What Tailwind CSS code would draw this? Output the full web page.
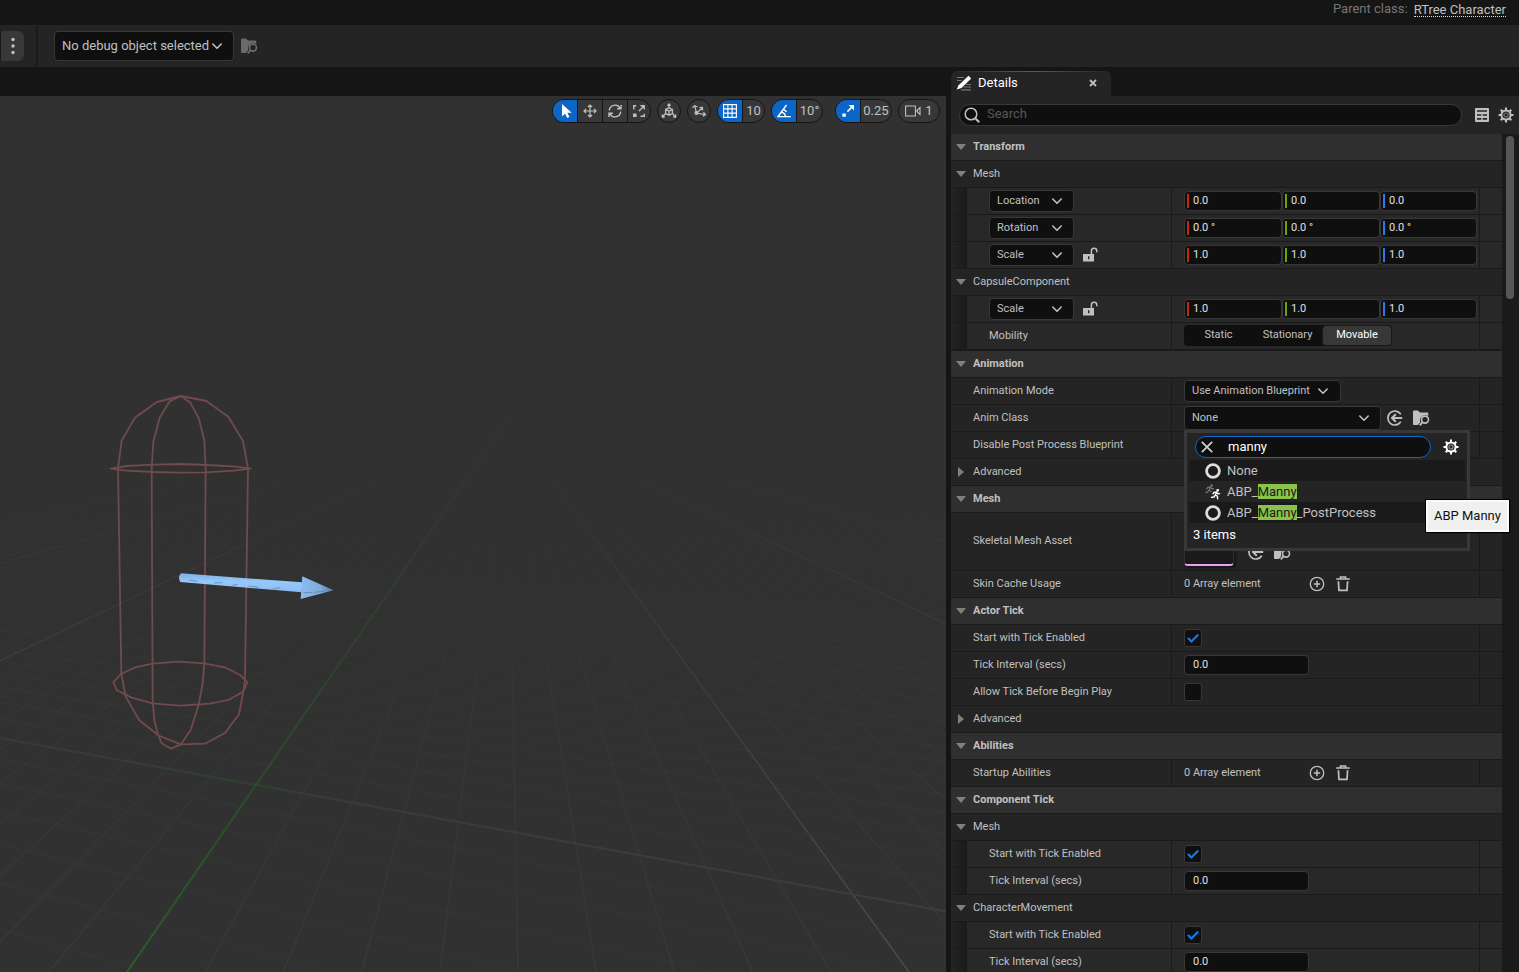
<!DOCTYPE html>
<html lang="en">
<head>
  <meta charset="UTF-8" />
  <meta name="viewport" content="width=device-width, initial-scale=1.0" />
  <title>Blueprint Editor</title>
  <script src="https://cdn.jsdelivr.net/npm/@tailwindcss/browser@4"></script>
</head>
<body class="flex h-screen flex-col overflow-hidden bg-[#151515] font-['Roboto',sans-serif] text-[11px] text-[#c0c0c0]">

  <!-- Icon set -->
  <svg class="hidden">
    <symbol id="chevron" viewBox="0 0 12 12"><path d="M1.8 4 6 8.2 10.2 4" fill="none" stroke="currentColor" stroke-width="1.6" stroke-linecap="round" stroke-linejoin="round" /></symbol>
    <symbol id="tri-down" viewBox="0 0 10 6"><path d="M0 0h10L5 6z" fill="currentColor" /></symbol>
    <symbol id="tri-right" viewBox="0 0 6 10"><path d="M0 0v10l6-5z" fill="currentColor" /></symbol>
    <symbol id="browse" viewBox="0 0 17 16">
      <path d="M0 1.5C0 1 .4.6 1 .6h3.8L7 2.6h7.4c.5 0 .9.4.9.9V6a5.4 5.4 0 0 0-8 6.2L5 15H1c-.6 0-1-.4-1-1z" fill="currentColor" />
      <circle cx="12" cy="9.6" r="3.5" fill="none" stroke="currentColor" stroke-width="1.6" />
      <path d="m9.6 12.2-2.8 3.2" stroke="currentColor" stroke-width="1.8" />
    </symbol>
    <symbol id="use-asset" viewBox="0 0 16 16">
      <path d="M13.8 4.2A7 7 0 1 0 13.8 11.8" fill="none" stroke="currentColor" stroke-width="1.7" />
      <path d="M15.2 8H5M8.8 4.2 5 8l3.8 3.8" fill="none" stroke="currentColor" stroke-width="2" />
    </symbol>
    <symbol id="lock-open" viewBox="0 0 15 15">
      <path d="M0 7h11v7.5H0z" fill="currentColor" />
      <path d="M8.4 7V4a2.7 2.7 0 0 1 5.4 0v1.2" fill="none" stroke="currentColor" stroke-width="1.5" />
      <path d="M5 9.2h1.4v3H5z" fill="#242424" />
    </symbol>
    <symbol id="gear" viewBox="0 0 16 16">
      <circle cx="8" cy="8" r="4.6" fill="none" stroke="currentColor" stroke-width="2" />
      <circle cx="8" cy="8" r="2" fill="none" stroke="currentColor" stroke-width="1.2" opacity=".5" />
      <path d="M8 .5v3M8 12.5v3M.5 8h3M12.5 8h3M2.7 2.7l2 2M11.3 11.3l2 2M2.7 13.3l2-2M11.3 4.7l2-2" stroke="currentColor" stroke-width="2" />
    </symbol>
    <symbol id="plus-circle" viewBox="0 0 16 16">
      <circle cx="8" cy="8" r="6.7" fill="none" stroke="currentColor" stroke-width="1.3" />
      <path d="M8 4.8v6.4M4.8 8h6.4" stroke="currentColor" stroke-width="1.5" />
    </symbol>
    <symbol id="trash" viewBox="0 0 16 16">
      <path d="M1.2 3h13.6M5.4 2.6V1h5.2v1.600" fill="none" stroke="currentColor" stroke-width="1.5" />
      <path d="M3.400 5.200 4 14.400h8l.6-9.200" fill="none" stroke="currentColor" stroke-width="1.7" />
    </symbol>
    <symbol id="tick" viewBox="0 0 18 18"><path d="m4.5 9.6 2.9 3 6.2-6.4" fill="none" stroke="#0f7bf0" stroke-width="2.2" stroke-linecap="round" stroke-linejoin="round" /></symbol>
    <symbol id="ring" viewBox="0 0 16 16"><circle cx="8" cy="8" r="6.4" fill="none" stroke="#dcdcdc" stroke-width="2.8" /></symbol>
  </svg>

  <!-- Menu strip -->
  <header class="flex h-[25px] shrink-0 items-start justify-end gap-[6px] pr-[13px] text-[13px] leading-[18px]">
    <span class="text-[#767676]">Parent class:</span>
    <a href="#" class="mt-px h-[16px] border-b border-dotted border-[#dddddd]">RTree Character</a>
  </header>

  <!-- Toolbar -->
  <div class="flex h-[42px] shrink-0 items-center bg-[#242424]">
    <button aria-label="More options" class="mr-[12px] flex h-[30px] w-[24px] items-center justify-center rounded-r-md border-l border-[#1a1a1a] bg-[#383838]">
      <svg class="h-[18px] w-[4px]" viewBox="0 0 4 18" fill="#c0c0c0"><circle cx="2" cy="2.5" r="1.7" /><circle cx="2" cy="9" r="1.7" /><circle cx="2" cy="15.5" r="1.7" /></svg>
    </button>
    <div class="mr-[16px] h-[40px] w-[2px] bg-[#1a1a1a]"></div>
    <div class="relative">
      <select aria-label="Debug object" class="h-[30px] w-[180px] appearance-none rounded-[4px] border border-[#383838] bg-[#0f0f0f] pl-[7px] text-[13px]"><option>No debug object selected</option></select>
      <svg class="pointer-events-none absolute top-[9px] right-[11px] size-[12px]"><use href="#chevron" /></svg>
    </div>
    <button aria-label="Browse to debug object" class="ml-[7px] text-[#6a6a6a]"><svg class="h-[16px] w-[17px]"><use href="#browse" /></svg></button>
  </div>

  <div class="flex min-h-0 flex-1">

    <!-- Viewport -->
    <main class="relative mt-[29px] mr-[5px] min-w-0 flex-1 overflow-hidden bg-[#313131]">
      <svg class="absolute inset-0 size-full" viewBox="0 96 946 876" preserveAspectRatio="xMidYMid slice" fill="none">
        <defs>
          <linearGradient id="fadeMinor" gradientUnits="userSpaceOnUse" x1="0" y1="470" x2="0" y2="972">
            <stop offset="0" stop-color="#fff" stop-opacity="0" /><stop offset=".3" stop-color="#fff" stop-opacity=".01" /><stop offset="1" stop-color="#fff" stop-opacity=".035" />
          </linearGradient>
          <linearGradient id="fadeMajor" gradientUnits="userSpaceOnUse" x1="0" y1="460" x2="0" y2="972">
            <stop offset="0" stop-color="#fff" stop-opacity="0" /><stop offset="1" stop-color="#fff" stop-opacity=".13" />
          </linearGradient>
          <linearGradient id="fadeGreen" gradientUnits="userSpaceOnUse" x1="0" y1="460" x2="0" y2="972">
            <stop offset="0" stop-color="#2a5a2a" stop-opacity=".1" /><stop offset=".6" stop-color="#2a5a2a" stop-opacity=".6" /><stop offset="1" stop-color="#285f28" />
          </linearGradient>
          <linearGradient id="crossMajor" gradientUnits="userSpaceOnUse" x1="0" y1="0" x2="946" y2="0">
            <stop offset="0" stop-color="#383a38" /><stop offset=".27" stop-color="#2e422e" /><stop offset=".45" stop-color="#3b3b3b" /><stop offset="1" stop-color="#3d3d3d" />
          </linearGradient>
          <linearGradient id="crossMinor" gradientUnits="userSpaceOnUse" x1="0" y1="0" x2="946" y2="0">
            <stop offset="0" stop-color="#313931" /><stop offset=".35" stop-color="#323732" /><stop offset=".5" stop-color="#353535" /><stop offset="1" stop-color="#353535" />
          </linearGradient>
          <linearGradient id="shaft" x1="0" y1="0" x2="0" y2="1">
            <stop offset="0" stop-color="#7fb0e6" /><stop offset=".45" stop-color="#96c8fb" /><stop offset="1" stop-color="#8abcf2" />
          </linearGradient>
          <linearGradient id="head" x1="0" y1="0" x2="1" y2="0">
            <stop offset="0" stop-color="#8cbcf0" /><stop offset=".6" stop-color="#7dabdc" /><stop offset="1" stop-color="#557796" />
          </linearGradient>
        </defs>
        <g id="grid"></g>

        <!-- Capsule and forward arrow -->
        <g transform="translate(90 380) scale(.3333)">
          <g stroke="#704a4d" stroke-width="5.5" stroke-linejoin="round">
            <path d="M84 265 95 182 135 113 200 66 273 48 349 63 415 110 459 183 474 265 465 900 460 935 447 1003 405 1059 345 1091 273 1093 208 1068 148 1021 107 950 94 880Z" />
            <path d="M185 265 190 185 209 113 239 64 273 48 301 68 327 116 343 182 347 265 343 850 338 910 326 975 302 1050 273 1093 243 1106 215 1090 204 1064 193 1020 188 960Z" />
            <path d="M62 266 110 258 190 254 272 252 350 255 430 259 482 266 430 272 350 277 272 278 190 276 110 272Z" />
            <path d="M70 907 93 882 135 862 188 851 265 845 342 850 405 862 450 885 472 907 460 935 415 960 360 971 270 977 188 970 125 953 81 931Z" />
          </g>
          <path d="M273 580 637 607 635 637 271 606Q262 593 273 580Z" fill="url(#shaft)" />
          <path d="M637 589 731 631 632 657Z" fill="url(#head)" />
          <path d="M298 601l24 3M372 609l26-1M428 616l14-3M476 618l28 4M548 627l22-4M640 638l28 0M672 637l30-3" stroke="#5f86b0" stroke-width="2.5" />
        </g>
      </svg>

      <div class="relative flex justify-end gap-[6px] pt-[3px] pr-[6px] text-[13px]">
        <div class="flex h-[24px] overflow-hidden rounded-full border border-[#151515] bg-[#383838]">
          <button aria-label="Select" class="flex w-[24px] items-center justify-center bg-[#0b66c8]"><svg class="ml-[4px] size-[16px]" viewBox="0 0 16 16"><path d="M3 1v12.5l3.1-2.8L8.2 15l2.2-1-2-4.2h4.3z" fill="#fff" /></svg></button>
          <button aria-label="Move" class="flex w-[25px] items-center justify-center border-l border-[#151515]"><svg class="size-[14px]" viewBox="0 0 14 14" fill="none" stroke="currentColor" stroke-width="1.2"><path d="M7 1v12M1 7h12M5 3l2-2 2 2M5 11l2 2 2-2M3 5 1 7l2 2M11 5l2 2-2 2" /></svg></button>
          <button aria-label="Rotate" class="flex w-[25px] items-center justify-center border-l border-[#151515]"><svg class="size-[14px]" viewBox="0 0 14 14" fill="none" stroke="currentColor" stroke-width="1.4"><path d="M1.3 6.4A5.7 5.7 0 0 1 12 4.2M12.7 7.6A5.7 5.7 0 0 1 2 9.8M13 1v3.8H9.2M1 13V9.2h3.8" /></svg></button>
          <button aria-label="Scale" class="flex w-[23px] items-center justify-center border-l border-[#151515]"><svg class="size-[14px]" viewBox="0 0 14 14" fill="none" stroke="currentColor" stroke-width="1.4"><path d="M1.8 5.5V1.8h2.4M12.2 9.8v2.400H8.5M7 7l5-5M8.4 1.8h3.8v3.8" /><path d="M1 9.400h3.600V13H1z" fill="currentColor" stroke="none" /></svg></button>
        </div>
        <button aria-label="World space" class="flex size-[24px] items-center justify-center rounded-full border border-[#151515] bg-[#383838]"><svg class="size-[16px]" viewBox="0 0 16 16" fill="none" stroke="currentColor" stroke-width="1.3"><path d="M8 1v4M6.4 2.6 8 1l1.6 1.6M8 4.8l3.4 1.7v4L8 12.2l-3.400-1.700v-4zM4.600 6.500 8 8.200l3.400-1.700M8 8.200v4M4.600 10.300 1.600 14M1.400 11.600V14h2.300M11.400 10.300l3 3.700M14.600 11.600V14h-2.300" /></svg></button>
        <button aria-label="Surface snapping" class="flex size-[24px] items-center justify-center rounded-full border border-[#151515] bg-[#383838]"><svg class="size-[16px]" viewBox="0 0 16 16" fill="none" stroke="currentColor" stroke-width="1.200"><path d="M5.400 10 3.800 2.800M1.600 4.800l2-2.200 2.800 1.200M5.400 10l5.800-4.800M8.400 4.600l3-.2.2 3M5.400 10l8.600 1.600M12.400 9.200l2 2.400-2.600 1.600" /><circle cx="5.400" cy="10" r="1.300" fill="currentColor" /></svg></button>
        <div class="flex h-[24px] overflow-hidden rounded-full border border-[#151515] bg-[#383838]">
          <button aria-label="Grid snapping" class="flex w-[24px] items-center justify-center bg-[#0b66c8]"><svg class="size-[14px]" viewBox="0 0 14 14" fill="none" stroke="#fff" stroke-width="1.1"><path d="M.6.6h12.8v12.8H.6zM4.9.6v12.8M9.1.6v12.8M.6 4.9h12.8M.6 9.1h12.8" /></svg></button>
          <button class="w-[22px] border-l border-[#151515]">10</button>
        </div>
        <div class="flex h-[24px] overflow-hidden rounded-full border border-[#151515] bg-[#383838]">
          <button aria-label="Rotation snapping" class="flex w-[24px] items-center justify-center bg-[#0b66c8]"><svg class="size-[14px]" viewBox="0 0 14 14" fill="none" stroke="#fff" stroke-width="1.4"><path d="M9.5 1 1 12.6h12.8M4 8.4c2.5 0 4.3 1.6 4.4 4.2M6.6 5.4l3 2.4" /></svg></button>
          <button class="w-[26px] border-l border-[#151515]">10°</button>
        </div>
        <div class="ml-[6px] flex h-[24px] overflow-hidden rounded-full border border-[#151515] bg-[#383838]">
          <button aria-label="Scale snapping" class="flex w-[24px] items-center justify-center bg-[#0b66c8]"><svg class="size-[14px]" viewBox="0 0 14 14" fill="none" stroke="#fff" stroke-width="1.6"><path d="m6.4 7.6 5.2-5.2" /><path d="M7.6 1h5.4v5.4zM1.4 9.4h3.4v3.4H1.4z" fill="#fff" stroke="none" /></svg></button>
          <button class="w-[31px] border-l border-[#151515]">0.25</button>
        </div>
        <button class="flex h-[24px] w-[42px] items-center justify-center gap-[4px] rounded-full border border-[#151515] bg-[#383838]">
          <svg class="h-[12px] w-[16px]" viewBox="0 0 16 12" fill="none" stroke="currentColor" stroke-width="1.1"><path d="M.6 1h9.8v10H.6zM15 2.6v6.8L12.4 7V5zM10.4 6h2" /></svg>1
        </button>
      </div>
    </main>

    <!-- Details panel -->
    <aside class="flex w-[568px] shrink-0 flex-col pt-[4px]">
      <div class="relative flex h-[25px] w-[160px] shrink-0 items-center overflow-hidden rounded-t-md bg-[#242424] pb-[2px] pl-[5px] text-[13px] text-white">
        <div class="absolute top-0 left-0 h-px w-full bg-linear-to-r from-transparent via-[#0b6cd8] to-transparent"></div>
        <svg class="mr-[6px] size-[16px]" viewBox="0 0 16 16"><path d="M1 2.5h7M1 5.5h4.5M10 9.5h5M7.5 12h7.5M5 14.8h10" stroke="#777" stroke-width="1.2" /><path d="M12.5.8 15.2 3.400 5.5 13 .6 14.6 2.6 10.2z" fill="#fff" /></svg>
        <h2 class="flex-1">Details</h2>
        <button aria-label="Close Details" class="mr-[14px] text-[#c0c0c0]"><svg class="size-[8px]" viewBox="0 0 8 8"><path d="m1 1 6 6M7 1 1 7" stroke="currentColor" stroke-width="1.8" /></svg></button>
      </div>

      <div class="flex h-[38px] shrink-0 items-center bg-[#242424] pr-[5px] pl-[8px]">
        <div class="relative mr-[13px] flex-1">
          <svg class="absolute top-[3px] left-[5px] size-[16px]" viewBox="0 0 16 16" fill="none" stroke="#c0c0c0" stroke-width="1.5"><circle cx="7" cy="7" r="5.8" /><path d="m11.2 11.2 4 4" stroke-width="2" /></svg>
          <input type="search" aria-label="Search details" placeholder="Search" class="block h-[22px] w-full rounded-full border border-[#383838] bg-[#0f0f0f] pb-[4px] pl-[27px] text-[13px] outline-none placeholder:text-[#575757]" />
        </div>
        <button aria-label="Property matrix" class="mr-[9px]"><svg class="block size-[14px]" viewBox="0 0 14 14"><rect width="14" height="14" rx="1" fill="#c0c0c0" /><path d="M2 3h10M2 7h4.300M7.700 7H12M2 10.800h4.300M7.700 10.800H12" stroke="#242424" stroke-width="1.7" /></svg></button>
        <button aria-label="Details settings"><svg class="block size-[16px]"><use href="#gear" /></svg></button>
      </div>

      <div class="flex min-h-0 flex-1">
        <div class="min-w-0 flex-1 bg-[#242424]">

          <h3 class="flex h-[27px] items-center border-b border-[#1a1a1a] bg-[#2f2f2f] pl-[5px] font-bold"><svg class="mr-[7px] h-[6px] w-[10px] text-[#808080]"><use href="#tri-down" /></svg>Transform</h3>
          <h4 class="flex h-[27px] items-center border-b border-[#1a1a1a] pl-[5px]"><svg class="mr-[7px] h-[6px] w-[10px] text-[#808080]"><use href="#tri-down" /></svg>Mesh</h4>

          <div class="flex h-[27px] border-b border-[#1a1a1a] bg-[#282828]">
            <div class="w-[16px] bg-linear-to-r from-[#242424] to-[#1a1a1a]"></div>
            <div class="flex w-[205px] items-center border-r border-[#1a1a1a] pl-[22px]">
              <div class="relative">
                <select aria-label="Location space" class="block h-[22px] w-[85px] appearance-none rounded-[4px] border border-[#383838] bg-[#0f0f0f] pl-[7px]"><option>Location</option></select>
                <svg class="pointer-events-none absolute top-[5px] right-[11px] size-[12px]"><use href="#chevron" /></svg>
              </div>
            </div>
            <div class="flex flex-1 items-center pl-[12px] text-[#e0e0e0]">
              <label class="flex h-[20px] w-[98px] items-center rounded-[4px] border border-[#383838] bg-[#0f0f0f] pl-[2px]"><span class="h-[14px] w-[2px] bg-[#c42a08]"></span><input aria-label="Location X" value="0.0" class="w-full min-w-0 pl-[4px] outline-none" /></label>
              <label class="flex h-[20px] w-[98px] items-center rounded-[4px] border border-[#383838] bg-[#0f0f0f] pl-[2px]"><span class="h-[14px] w-[2px] bg-[#65a800]"></span><input aria-label="Location Y" value="0.0" class="w-full min-w-0 pl-[4px] outline-none" /></label>
              <label class="flex h-[20px] w-[97px] items-center rounded-[4px] border border-[#383838] bg-[#0f0f0f] pl-[2px]"><span class="h-[14px] w-[2px] bg-[#2c7be8]"></span><input aria-label="Location Z" value="0.0" class="w-full min-w-0 pl-[4px] outline-none" /></label>
            </div>
            <div class="w-[23px] border-l border-[#1a1a1a]"></div>
          </div>

          <div class="flex h-[27px] border-b border-[#1a1a1a] bg-[#282828]">
            <div class="w-[16px] bg-linear-to-r from-[#242424] to-[#1a1a1a]"></div>
            <div class="flex w-[205px] items-center border-r border-[#1a1a1a] pl-[22px]">
              <div class="relative">
                <select aria-label="Rotation space" class="block h-[22px] w-[85px] appearance-none rounded-[4px] border border-[#383838] bg-[#0f0f0f] pl-[7px]"><option>Rotation</option></select>
                <svg class="pointer-events-none absolute top-[5px] right-[11px] size-[12px]"><use href="#chevron" /></svg>
              </div>
            </div>
            <div class="flex flex-1 items-center pl-[12px] text-[#e0e0e0]">
              <label class="flex h-[20px] w-[98px] items-center rounded-[4px] border border-[#383838] bg-[#0f0f0f] pl-[2px]"><span class="h-[14px] w-[2px] bg-[#c42a08]"></span><input aria-label="Rotation X" value="0.0 °" class="w-full min-w-0 pl-[4px] outline-none" /></label>
              <label class="flex h-[20px] w-[98px] items-center rounded-[4px] border border-[#383838] bg-[#0f0f0f] pl-[2px]"><span class="h-[14px] w-[2px] bg-[#65a800]"></span><input aria-label="Rotation Y" value="0.0 °" class="w-full min-w-0 pl-[4px] outline-none" /></label>
              <label class="flex h-[20px] w-[97px] items-center rounded-[4px] border border-[#383838] bg-[#0f0f0f] pl-[2px]"><span class="h-[14px] w-[2px] bg-[#2c7be8]"></span><input aria-label="Rotation Z" value="0.0 °" class="w-full min-w-0 pl-[4px] outline-none" /></label>
            </div>
            <div class="w-[23px] border-l border-[#1a1a1a]"></div>
          </div>

          <div class="flex h-[27px] border-b border-[#1a1a1a] bg-[#282828]">
            <div class="w-[16px] bg-linear-to-r from-[#242424] to-[#1a1a1a]"></div>
            <div class="flex w-[205px] items-center border-r border-[#1a1a1a] pl-[22px]">
              <div class="relative">
                <select aria-label="Scale space" class="block h-[22px] w-[85px] appearance-none rounded-[4px] border border-[#383838] bg-[#0f0f0f] pl-[7px]"><option>Scale</option></select>
                <svg class="pointer-events-none absolute top-[5px] right-[11px] size-[12px]"><use href="#chevron" /></svg>
              </div>
              <button aria-label="Lock scale" class="ml-[9px] pb-[2px]"><svg class="block size-[15px]"><use href="#lock-open" /></svg></button>
            </div>
            <div class="flex flex-1 items-center pl-[12px] text-[#e0e0e0]">
              <label class="flex h-[20px] w-[98px] items-center rounded-[4px] border border-[#383838] bg-[#0f0f0f] pl-[2px]"><span class="h-[14px] w-[2px] bg-[#c42a08]"></span><input aria-label="Scale X" value="1.0" class="w-full min-w-0 pl-[4px] outline-none" /></label>
              <label class="flex h-[20px] w-[98px] items-center rounded-[4px] border border-[#383838] bg-[#0f0f0f] pl-[2px]"><span class="h-[14px] w-[2px] bg-[#65a800]"></span><input aria-label="Scale Y" value="1.0" class="w-full min-w-0 pl-[4px] outline-none" /></label>
              <label class="flex h-[20px] w-[97px] items-center rounded-[4px] border border-[#383838] bg-[#0f0f0f] pl-[2px]"><span class="h-[14px] w-[2px] bg-[#2c7be8]"></span><input aria-label="Scale Z" value="1.0" class="w-full min-w-0 pl-[4px] outline-none" /></label>
            </div>
            <div class="w-[23px] border-l border-[#1a1a1a]"></div>
          </div>

          <h4 class="flex h-[27px] items-center border-b border-[#1a1a1a] pl-[5px]"><svg class="mr-[7px] h-[6px] w-[10px] text-[#808080]"><use href="#tri-down" /></svg>CapsuleComponent</h4>

          <div class="flex h-[27px] border-b border-[#1a1a1a] bg-[#282828]">
            <div class="w-[16px] bg-linear-to-r from-[#242424] to-[#1a1a1a]"></div>
            <div class="flex w-[205px] items-center border-r border-[#1a1a1a] pl-[22px]">
              <div class="relative">
                <select aria-label="Capsule scale space" class="block h-[22px] w-[85px] appearance-none rounded-[4px] border border-[#383838] bg-[#0f0f0f] pl-[7px]"><option>Scale</option></select>
                <svg class="pointer-events-none absolute top-[5px] right-[11px] size-[12px]"><use href="#chevron" /></svg>
              </div>
              <button aria-label="Lock capsule scale" class="ml-[9px] pb-[2px]"><svg class="block size-[15px]"><use href="#lock-open" /></svg></button>
            </div>
            <div class="flex flex-1 items-center pl-[12px] text-[#e0e0e0]">
              <label class="flex h-[20px] w-[98px] items-center rounded-[4px] border border-[#383838] bg-[#0f0f0f] pl-[2px]"><span class="h-[14px] w-[2px] bg-[#c42a08]"></span><input aria-label="Capsule scale X" value="1.0" class="w-full min-w-0 pl-[4px] outline-none" /></label>
              <label class="flex h-[20px] w-[98px] items-center rounded-[4px] border border-[#383838] bg-[#0f0f0f] pl-[2px]"><span class="h-[14px] w-[2px] bg-[#65a800]"></span><input aria-label="Capsule scale Y" value="1.0" class="w-full min-w-0 pl-[4px] outline-none" /></label>
              <label class="flex h-[20px] w-[97px] items-center rounded-[4px] border border-[#383838] bg-[#0f0f0f] pl-[2px]"><span class="h-[14px] w-[2px] bg-[#2c7be8]"></span><input aria-label="Capsule scale Z" value="1.0" class="w-full min-w-0 pl-[4px] outline-none" /></label>
            </div>
            <div class="w-[23px] border-l border-[#1a1a1a]"></div>
          </div>

          <div class="flex h-[28px] border-b-2 border-[#1a1a1a] bg-[#282828]">
            <div class="w-[16px] bg-linear-to-r from-[#242424] to-[#1a1a1a]"></div>
            <div class="flex w-[205px] items-center border-r border-[#1a1a1a] pl-[22px]">Mobility</div>
            <div class="flex flex-1 items-start pt-[2px] pl-[12px]">
              <div role="radiogroup" aria-label="Mobility" class="flex h-[21px] rounded-[4px] bg-[#0f0f0f]">
                <label class="flex w-[69px] items-center justify-center rounded-[4px] has-checked:border has-checked:border-[#1a1a1a] has-checked:bg-[#383838] has-checked:text-white"><input type="radio" name="mobility" class="sr-only" />Static</label>
                <label class="flex w-[69px] items-center justify-center rounded-[4px] has-checked:border has-checked:border-[#1a1a1a] has-checked:bg-[#383838] has-checked:text-white"><input type="radio" name="mobility" class="sr-only" />Stationary</label>
                <label class="flex w-[70px] items-center justify-center rounded-[4px] has-checked:border has-checked:border-[#1a1a1a] has-checked:bg-[#383838] has-checked:text-white"><input type="radio" name="mobility" class="sr-only" checked />Movable</label>
              </div>
            </div>
            <div class="w-[23px] border-l border-[#1a1a1a]"></div>
          </div>

          <h3 class="flex h-[27px] items-center border-b border-[#1a1a1a] bg-[#2f2f2f] pl-[5px] font-bold"><svg class="mr-[7px] h-[6px] w-[10px] text-[#808080]"><use href="#tri-down" /></svg>Animation</h3>

          <div class="flex h-[27px] border-b border-[#1a1a1a]">
            <label for="anim-mode" class="flex w-[221px] items-center border-r border-[#1a1a1a] pl-[22px]">Animation Mode</label>
            <div class="flex flex-1 items-center pl-[12px]">
              <div class="relative">
                <select id="anim-mode" class="block h-[22px] w-[157px] appearance-none rounded-[4px] border border-[#383838] bg-[#0f0f0f] pl-[7px]"><option>Use Animation Blueprint</option></select>
                <svg class="pointer-events-none absolute top-[5px] right-[12px] size-[12px]"><use href="#chevron" /></svg>
              </div>
            </div>
            <div class="w-[23px] border-l border-[#1a1a1a]"></div>
          </div>

          <div class="flex h-[27px] border-b border-[#1a1a1a]">
            <label for="anim-class" class="flex w-[221px] items-center border-r border-[#1a1a1a] pl-[22px]">Anim Class</label>
            <div class="flex flex-1 items-center pl-[12px]">
              <div class="relative mr-[6px]">
                <select id="anim-class" class="block h-[24px] w-[197px] appearance-none rounded-[4px] border border-[#383838] bg-[#0f0f0f] pl-[7px]"><option>None</option></select>
                <svg class="pointer-events-none absolute top-[6px] right-[11px] size-[12px]"><use href="#chevron" /></svg>

                <!-- Class picker -->
                <div class="absolute top-full left-0 z-20 w-[286px] border-3 border-[#383838] bg-[#242424] px-[2px] pt-[3px] text-[13px]">
                  <div class="flex h-[24px] items-start pl-[6px]">
                    <div class="relative">
                      <svg class="absolute top-[5px] left-[6px] size-[12px]" viewBox="0 0 12 12"><path d="m.8.8 10.4 10.4M11.2.8.8 11.2" stroke="#d0d0d0" stroke-width="1.7" /></svg>
                      <input aria-label="Search classes" value="manny" class="block h-[22px] w-[236px] rounded-full border border-[#0b66c8] bg-[#0f0f0f] pb-[2px] pl-[32px] text-white outline-none" />
                    </div>
                    <button aria-label="View options" class="mt-[3px] ml-[12px] text-white"><svg class="block size-[16px]"><use href="#gear" /></svg></button>
                  </div>
                  <ul>
                    <li class="flex h-[21px] items-center gap-[6px] bg-[#1a1a1a] pl-[16px]"><svg class="size-[16px]"><use href="#ring" /></svg>None</li>
                    <li class="flex h-[21px] items-center gap-[6px] pl-[16px]">
                      <svg class="size-[16px]" viewBox="0 0 16 16" fill="none" stroke-linecap="round" stroke-linejoin="round">
                        <g stroke="#777" stroke-width="1.2"><path d="M5.5 3.2 4 6l2 1.6M4 6 2.5 8.2.8 8.4M5.5 3.2 2.8 3.4 1.600 5M5.5 3.2 7 5l1.600-.4" /><circle cx="6.6" cy="1.5" r=".7" fill="#777" /></g>
                        <g stroke="#fff" stroke-width="1.4"><path d="M11.600 8 10.400 10.800l2 1.500.2 2.500M10.400 10.800 9 13l-2.400.3M11.600 8 9.200 8.200 8 9.700M11.600 8l1.300 1.900 1.700-.3" /><circle cx="12.7" cy="6.3" r=".7" fill="#fff" /></g>
                      </svg>
                      <span>ABP_<mark class="bg-[#8bc34a] text-[#1a1a1a]">Manny</mark></span>
                    </li>
                    <li class="flex h-[21px] items-center gap-[6px] bg-[#1a1a1a] pl-[16px]"><svg class="size-[16px]"><use href="#ring" /></svg><span>ABP_<mark class="bg-[#8bc34a] text-[#1a1a1a]">Manny</mark>_PostProcess</span></li>
                  </ul>
                  <p class="h-[25px] pl-[4px] leading-[24px] text-white">3 items</p>
                  <div role="tooltip" class="absolute top-[67px] left-[239px] border-2 border-[#fafafa] bg-[#f0f0f0] px-[6px] py-[5px] leading-[18px] whitespace-nowrap text-[#101010] shadow-[0_0_0_1px_#000,1px_1px_1px_#000]">ABP Manny</div>
                </div>
              </div>
              <button aria-label="Use selected class" class="mr-[10px]"><svg class="block size-[16px]"><use href="#use-asset" /></svg></button>
              <button aria-label="Browse to class"><svg class="block h-[16px] w-[17px]"><use href="#browse" /></svg></button>
            </div>
            <div class="w-[23px] border-l border-[#1a1a1a]"></div>
          </div>

          <div class="flex h-[27px] border-b border-[#1a1a1a]">
            <div class="flex w-[221px] items-center border-r border-[#1a1a1a] pl-[22px]">Disable Post Process Blueprint</div>
            <div class="flex-1"></div>
            <div class="w-[23px] border-l border-[#1a1a1a]"></div>
          </div>

          <h4 class="flex h-[27px] items-center border-b border-[#1a1a1a] pl-[7px]"><svg class="mr-[9px] h-[10px] w-[6px] text-[#808080]"><use href="#tri-right" /></svg>Advanced</h4>
          <h3 class="flex h-[27px] items-center border-b border-[#1a1a1a] bg-[#2f2f2f] pl-[5px] font-bold"><svg class="mr-[7px] h-[6px] w-[10px] text-[#808080]"><use href="#tri-down" /></svg>Mesh</h3>

          <div class="flex h-[58px] border-b border-[#1a1a1a]">
            <div class="flex w-[221px] items-center border-r border-[#1a1a1a] pl-[22px]">Skeletal Mesh Asset</div>
            <div class="flex flex-1 items-end pb-[4px] pl-[12px]">
              <div class="mr-[14px] h-[50px] w-[50px] rounded-[4px] border border-b-2 border-[#2f2f2f] border-b-[#f0a0f0] bg-[#1a1a1a] shadow-[2px_2px_3px_#151515]"></div>
              <button aria-label="Use selected mesh" class="mr-[10px] mb-[6px]"><svg class="block size-[16px]"><use href="#use-asset" /></svg></button>
              <button aria-label="Browse to mesh" class="mb-[6px]"><svg class="block h-[16px] w-[17px]"><use href="#browse" /></svg></button>
            </div>
            <div class="w-[23px] border-l border-[#1a1a1a]"></div>
          </div>

          <div class="flex h-[27px] border-b border-[#1a1a1a]">
            <div class="flex w-[221px] items-center border-r border-[#1a1a1a] pl-[22px]">Skin Cache Usage</div>
            <div class="flex flex-1 items-center pl-[12px]">
              <span class="w-[125px]">0 Array element</span>
              <button aria-label="Add skin cache element" class="mr-[10px]"><svg class="block size-[16px]"><use href="#plus-circle" /></svg></button>
              <button aria-label="Clear skin cache array"><svg class="block size-[16px]"><use href="#trash" /></svg></button>
            </div>
            <div class="w-[23px] border-l border-[#1a1a1a]"></div>
          </div>

          <h3 class="flex h-[27px] items-center border-b border-[#1a1a1a] bg-[#2f2f2f] pl-[5px] font-bold"><svg class="mr-[7px] h-[6px] w-[10px] text-[#808080]"><use href="#tri-down" /></svg>Actor Tick</h3>

          <div class="flex h-[27px] border-b border-[#1a1a1a]">
            <label for="actor-tick" class="flex w-[221px] items-center border-r border-[#1a1a1a] pl-[22px]">Start with Tick Enabled</label>
            <div class="flex flex-1 items-center pl-[12px]">
              <span class="relative"><input id="actor-tick" type="checkbox" checked class="peer block size-[18px] appearance-none rounded-[3px] border border-[#383838] bg-[#0f0f0f]" /><svg class="pointer-events-none absolute inset-0 hidden size-[18px] peer-checked:block"><use href="#tick" /></svg></span>
            </div>
            <div class="w-[23px] border-l border-[#1a1a1a]"></div>
          </div>
          <div class="flex h-[27px] border-b border-[#1a1a1a]">
            <label for="actor-interval" class="flex w-[221px] items-center border-r border-[#1a1a1a] pl-[22px]">Tick Interval (secs)</label>
            <div class="flex flex-1 items-center pl-[12px]"><input id="actor-interval" value="0.0" class="h-[20px] w-[125px] rounded-[4px] border border-[#383838] bg-[#0f0f0f] pb-[2px] pl-[8px] text-[#e0e0e0] outline-none" /></div>
            <div class="w-[23px] border-l border-[#1a1a1a]"></div>
          </div>
          <div class="flex h-[27px] border-b border-[#1a1a1a]">
            <label for="tick-before" class="flex w-[221px] items-center border-r border-[#1a1a1a] pl-[22px]">Allow Tick Before Begin Play</label>
            <div class="flex flex-1 items-center pl-[12px]">
              <span class="relative"><input id="tick-before" type="checkbox" class="peer block size-[18px] appearance-none rounded-[3px] border border-[#383838] bg-[#0f0f0f]" /><svg class="pointer-events-none absolute inset-0 hidden size-[18px] peer-checked:block"><use href="#tick" /></svg></span>
            </div>
            <div class="w-[23px] border-l border-[#1a1a1a]"></div>
          </div>

          <h4 class="flex h-[27px] items-center border-b border-[#1a1a1a] pl-[7px]"><svg class="mr-[9px] h-[10px] w-[6px] text-[#808080]"><use href="#tri-right" /></svg>Advanced</h4>
          <h3 class="flex h-[27px] items-center border-b border-[#1a1a1a] bg-[#2f2f2f] pl-[5px] font-bold"><svg class="mr-[7px] h-[6px] w-[10px] text-[#808080]"><use href="#tri-down" /></svg>Abilities</h3>

          <div class="flex h-[27px] border-b border-[#1a1a1a]">
            <div class="flex w-[221px] items-center border-r border-[#1a1a1a] pl-[22px]">Startup Abilities</div>
            <div class="flex flex-1 items-center pl-[12px]">
              <span class="w-[125px]">0 Array element</span>
              <button aria-label="Add ability" class="mr-[10px]"><svg class="block size-[16px]"><use href="#plus-circle" /></svg></button>
              <button aria-label="Clear abilities"><svg class="block size-[16px]"><use href="#trash" /></svg></button>
            </div>
            <div class="w-[23px] border-l border-[#1a1a1a]"></div>
          </div>

          <h3 class="flex h-[27px] items-center border-b border-[#1a1a1a] bg-[#2f2f2f] pl-[5px] font-bold"><svg class="mr-[7px] h-[6px] w-[10px] text-[#808080]"><use href="#tri-down" /></svg>Component Tick</h3>
          <h4 class="flex h-[27px] items-center border-b border-[#1a1a1a] pl-[5px]"><svg class="mr-[7px] h-[6px] w-[10px] text-[#808080]"><use href="#tri-down" /></svg>Mesh</h4>

          <div class="flex h-[27px] border-b border-[#1a1a1a] bg-[#282828]">
            <div class="w-[16px] bg-linear-to-r from-[#242424] to-[#1a1a1a]"></div>
            <label for="mesh-tick" class="flex w-[205px] items-center border-r border-[#1a1a1a] pl-[22px]">Start with Tick Enabled</label>
            <div class="flex flex-1 items-center pl-[12px]">
              <span class="relative"><input id="mesh-tick" type="checkbox" checked class="peer block size-[18px] appearance-none rounded-[3px] border border-[#383838] bg-[#0f0f0f]" /><svg class="pointer-events-none absolute inset-0 hidden size-[18px] peer-checked:block"><use href="#tick" /></svg></span>
            </div>
            <div class="w-[23px] border-l border-[#1a1a1a]"></div>
          </div>
          <div class="flex h-[27px] border-b border-[#1a1a1a] bg-[#282828]">
            <div class="w-[16px] bg-linear-to-r from-[#242424] to-[#1a1a1a]"></div>
            <label for="mesh-interval" class="flex w-[205px] items-center border-r border-[#1a1a1a] pl-[22px]">Tick Interval (secs)</label>
            <div class="flex flex-1 items-center pl-[12px]"><input id="mesh-interval" value="0.0" class="h-[20px] w-[125px] rounded-[4px] border border-[#383838] bg-[#0f0f0f] pb-[2px] pl-[8px] text-[#e0e0e0] outline-none" /></div>
            <div class="w-[23px] border-l border-[#1a1a1a]"></div>
          </div>

          <h4 class="flex h-[27px] items-center border-b border-[#1a1a1a] pl-[5px]"><svg class="mr-[7px] h-[6px] w-[10px] text-[#808080]"><use href="#tri-down" /></svg>CharacterMovement</h4>

          <div class="flex h-[27px] border-b border-[#1a1a1a] bg-[#282828]">
            <div class="w-[16px] bg-linear-to-r from-[#242424] to-[#1a1a1a]"></div>
            <label for="move-tick" class="flex w-[205px] items-center border-r border-[#1a1a1a] pl-[22px]">Start with Tick Enabled</label>
            <div class="flex flex-1 items-center pl-[12px]">
              <span class="relative"><input id="move-tick" type="checkbox" checked class="peer block size-[18px] appearance-none rounded-[3px] border border-[#383838] bg-[#0f0f0f]" /><svg class="pointer-events-none absolute inset-0 hidden size-[18px] peer-checked:block"><use href="#tick" /></svg></span>
            </div>
            <div class="w-[23px] border-l border-[#1a1a1a]"></div>
          </div>
          <div class="flex h-[27px] border-b border-[#1a1a1a] bg-[#282828]">
            <div class="w-[16px] bg-linear-to-r from-[#242424] to-[#1a1a1a]"></div>
            <label for="move-interval" class="flex w-[205px] items-center border-r border-[#1a1a1a] pl-[22px]">Tick Interval (secs)</label>
            <div class="flex flex-1 items-center pl-[12px]"><input id="move-interval" value="0.0" class="h-[20px] w-[125px] rounded-[4px] border border-[#383838] bg-[#0f0f0f] pb-[2px] pl-[8px] text-[#e0e0e0] outline-none" /></div>
            <div class="w-[23px] border-l border-[#1a1a1a]"></div>
          </div>
        </div>

        <!-- Scrollbar -->
        <div class="w-[17px] shrink-0 bg-[#1a1a1a] pt-[2px] pl-[4px]"><div class="h-[163px] w-[8px] rounded-full bg-[#575757]"></div></div>
      </div>
    </aside>
  </div>

  <script>
    // Floor grid in two-point perspective
    const grid = document.getElementById('grid');

    function line(x1, y1, x2, y2, stroke, width) {
      const el = document.createElementNS('http://www.w3.org/2000/svg', 'path');
      el.setAttribute('d', `M${x1} ${y1}L${x2} ${y2}`);
      el.setAttribute('stroke', stroke);
      el.setAttribute('stroke-width', width);
      grid.appendChild(el);
    }

    for (let i = -30; i <= 36; i++) {
      const x = 127 + 78.2 * i;
      if (i !== 0) line(508, 419, x, 972, i % 10 ? 'url(#fadeMinor)' : 'url(#fadeMajor)', 1.5);
    }
    for (let j = -7; j <= 24; j++) {
      const y = 413 + 1 / (0.003077 + 0.00019 * j);
      const slope = (y - 408) / 1800;
      const main = j === 0;
      line(0, y, 946, y + slope * 946, main ? 'url(#crossMajor)' : j > 3 ? 'url(#fadeMinor)' : 'url(#crossMinor)', main ? 2 : 1);
    }
    line(508, 419, 127, 972, 'url(#fadeGreen)', 2);
  </script>

</body>
</html>
